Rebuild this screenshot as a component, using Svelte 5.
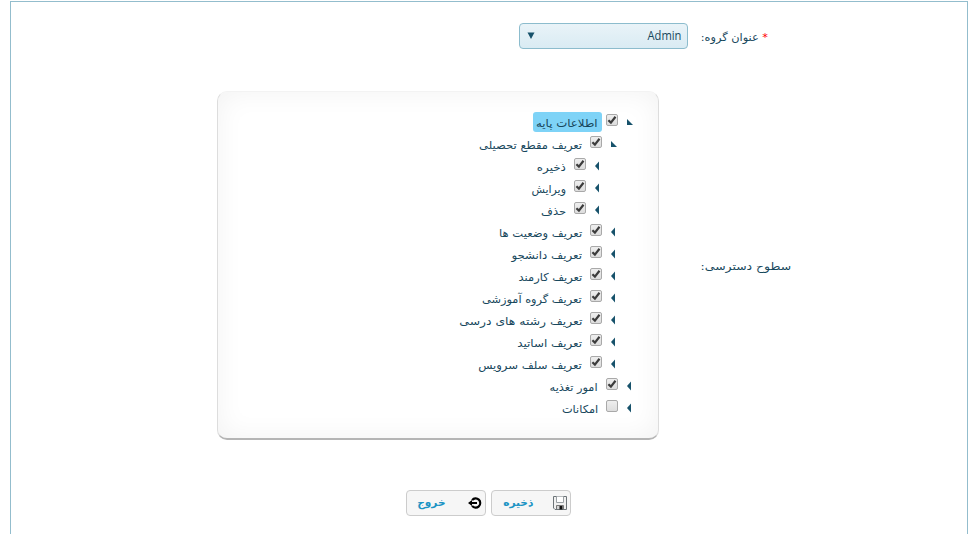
<script>
  const rows = [
    { level: 0, text: 'اطلاعات پایه', width: 61, stretch: 1.07, open: true, checked: true, selected: true },
    { level: 1, text: 'تعریف مقطع تحصیلی', width: 103, stretch: 1.05, open: true, checked: true },
    { level: 2, text: 'ذخیره', width: 29, stretch: 1.08, checked: true },
    { level: 2, text: 'ویرایش', width: 35, stretch: 1.0, checked: true },
    { level: 2, text: 'حذف', width: 25, stretch: 1.04, checked: true },
    { level: 1, text: 'تعریف وضعیت ها', width: 83, stretch: 1.05, checked: true },
    { level: 1, text: 'تعریف دانشجو', width: 71, stretch: 1.07, checked: true },
    { level: 1, text: 'تعریف کارمند', width: 64, stretch: 1.04, checked: true },
    { level: 1, text: 'تعریف گروه آموزشی', width: 100, stretch: 1.03, checked: true },
    { level: 1, text: 'تعریف رشته های درسی', width: 123, stretch: 1.125, checked: true },
    { level: 1, text: 'تعریف اساتید', width: 65, stretch: 1.08, checked: true },
    { level: 1, text: 'تعریف سلف سرویس', width: 104, stretch: 1.06, checked: true },
    { level: 0, text: 'امور تغذیه', width: 48, stretch: 1.03, checked: true },
    { level: 0, text: 'امکانات', width: 36, stretch: 1.03, checked: false }
  ];
</script>

<main dir="rtl">
  <div class="field">
    <label for="group"><b>*</b> عنوان گروه:</label>
    <button id="group" class="select">
      <span>Admin</span>
      <svg width="8" height="7" viewBox="0 0 8 7"><path d="M0.5 0.5H7.5L4 7Z" fill="#17526b" /></svg>
    </button>
  </div>

  <div class="access">
    <div class="caption"><span>سطوح دسترسی:</span></div>
    <div class="panel" role="tree">
      {#each rows as row}
        <div class="row level{row.level}" role="treeitem" aria-selected={!!row.selected}>
          <svg class="arrow" width="6" height="10" viewBox="0 0 6 10">
            {#if row.open}
              <path d="M1 2V8H7Z" fill="#17526b" />
            {:else}
              <path d="M5 .5V9.5L1 5Z" fill="#17526b" />
            {/if}
          </svg>
          <span class="check">
            {#if row.checked}
              <svg width="10" height="10" viewBox="0 0 10 10"><path d="M1.4 5.2L3.9 7.6L8.5 1.7" fill="none" stroke="#3c3c3c" stroke-width="2.2" /></svg>
            {/if}
          </span>
          <span class="name" class:selected={row.selected} style:width="{row.width}px">
            <span class="text" style:transform="scaleX({row.stretch})">{row.text}</span>
          </span>
        </div>
      {/each}
    </div>
  </div>

  <div class="actions">
    <button class="action">
      <svg width="14" height="14" viewBox="0 0 14 14">
        <path d="M.5 .5H13.5V13.5H2L.5 12Z" fill="#f1f1f1" stroke="#6d7478" />
        <path d="M3.5 .5V6.5H10.5V.5" fill="#fff" stroke="#9aa0a4" />
        <path d="M3.5 13V9.5H10.5V13" fill="#d5d5d5" stroke="#777" />
        <path d="M6.5 10H9.5V13.5H6.5Z" fill="#111" />
      </svg>
      <span>ذخیره</span>
    </button>
    <button class="action exit">
      <svg width="14" height="14" viewBox="0 0 14 14">
        <path d="M4.1 4.1A4.6 4.6 0 1 1 4.1 9.9" fill="none" stroke="#000" stroke-width="2.1" />
        <path d="M0 7L4 4.1V6H9V8H4V9.9Z" fill="#000" />
      </svg>
      <span>خروج</span>
    </button>
  </div>
</main>

<style>
  :global(body) { background: #fff; overflow: hidden; }
  main {
    box-sizing: border-box;
    width: 958px;
    height: 540px;
    margin: 1px 0 0 10px;
    border: 1px solid #93bdcd;
    font: 11px/20px "DejaVu Sans", "Liberation Sans", sans-serif;
    color: #17475c;
  }
  button { font: inherit; margin: 0; }
  .field {
    display: flex;
    align-items: flex-start;
    height: 68px;
    padding: 21px 199px 0 0;
  }
  label {
    width: 68px;
    margin-left: 12px;
    padding-top: 5px;
    white-space: nowrap;
    transform: scaleX(1.03);
    transform-origin: right;
  }
  label b { color: #f00; font-weight: 400; }
  .select {
    box-sizing: border-box;
    display: flex;
    justify-content: space-between;
    align-items: center;
    width: 169px;
    height: 26px;
    padding: 0 6px 1px 7px;
    border: 1px solid #8cbccd;
    border-radius: 4px;
    background: linear-gradient(#e9f3f8, #d9ebf3);
    color: #17475c;
    font: 12px "Open Sans", sans-serif;
  }
  .select span { transform: scaleX(.93); transform-origin: right; }
  .access { display: flex; align-items: center; padding-right: 176px; }
  .caption { width: 91px; margin-left: 41px; padding-top: 2px; white-space: nowrap; }
  .caption span, .text { display: inline-block; transform-origin: right; }
  .caption span { transform: scaleX(1.13); }
  .panel {
    box-sizing: border-box;
    width: 442px;
    height: 349px;
    padding: 20px 26px 0 0;
    border: 1px solid #ddd;
    border-top-color: #f3f3f3;
    border-bottom: 2px solid #b5b5b5;
    border-radius: 10px;
    box-shadow: inset 0 0 28px rgba(0, 0, 0, .055);
  }
  .row { display: flex; align-items: flex-start; height: 22px; }
  .level1 { padding-right: 16px; }
  .level2 { padding-right: 32px; }
  .arrow { margin: 5px 0 0 8px; flex: none; overflow: visible; }
  .check {
    box-sizing: border-box;
    flex: none;
    width: 12px;
    height: 12px;
    margin: 2px 0 0 4px;
    border: 1px solid #a9a9a9;
    border-radius: 2px;
    background: linear-gradient(#eee, #ddd);
  }
  .check svg { display: block; }
  .name { height: 20px; padding: 0 4px; border-radius: 3px; white-space: nowrap; line-height: 23px; }
  .selected { background: #7ed3f7; }
  .actions { display: flex; gap: 5px; padding: 50px 396px 0 0; }
  .action {
    box-sizing: border-box;
    display: flex;
    align-items: center;
    width: 80px;
    height: 26px;
    padding: 0 3px 0 0;
    border: 1px solid #ccc;
    border-radius: 4px;
    background: #f6f6f6;
    color: #1c94c4;
    font-weight: 700;
  }
  .action svg { margin-left: 20px; }
  .exit svg { margin-left: 22px; }
  .action span { transform: scaleX(.96); transform-origin: right; }
</style>
